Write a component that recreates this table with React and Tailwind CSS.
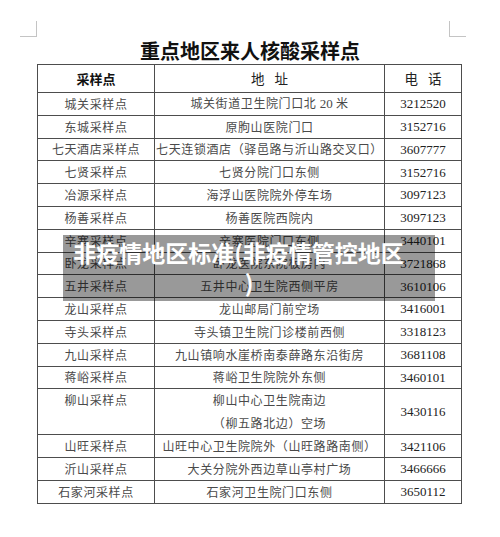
const rows = [
  { name: '城关采样点', addr: ['城关街道卫生院门口北 ', <span key="n" className="font-['Liberation_Serif',serif] text-[13px] tracking-normal">20</span>, ' 米'], tel: '3212520' },
  { name: '东城采样点', addr: '原朐山医院门口', tel: '3152716' },
  { name: '七天酒店采样点', addr: '七天连锁酒店（驿邑路与沂山路交叉口）', tel: '3607777' },
  { name: '七贤采样点', addr: '七贤分院门口东侧', tel: '3152716' },
  { name: '冶源采样点', addr: '海浮山医院院外停车场', tel: '3097123' },
  { name: '杨善采样点', addr: '杨善医院西院内', tel: '3097123' },
  { name: '辛寨采样点', addr: '辛寨医院门口东侧', tel: '3440101' },
  { name: '卧龙采样点', addr: '卧龙医院东院板房内', tel: '3721868' },
  { name: '五井采样点', addr: '五井中心卫生院西侧平房', tel: '3610106' },
  { name: '龙山采样点', addr: '龙山邮局门前空场', tel: '3416001' },
  { name: '寺头采样点', addr: '寺头镇卫生院门诊楼前西侧', tel: '3318123' },
  { name: '九山采样点', addr: '九山镇响水崖桥南泰薛路东沿街房', tel: '3681108' },
  { name: '蒋峪采样点', addr: '蒋峪卫生院院外东侧', tel: '3460101' },
]

const tail = [
  { name: '山旺采样点', addr: '山旺中心卫生院院外（山旺路路南侧）', tel: '3421106' },
  { name: '沂山采样点', addr: '大关分院外西边草山亭村广场', tel: '3466666' },
  { name: '石家河采样点', addr: '石家河卫生院门口东侧', tel: '3650112' },
]

const cell = 'border border-[#4d4d4d] p-0 text-center align-middle'
const cjk = "font-['Noto_Sans_CJK_SC',sans-serif]"
const num = "font-['Liberation_Serif',serif] text-[13px] text-[#222]"

const Row = ({ r }) => (
  <tr className="h-[22.8px]">
    <td className={`${cell} ${cjk} text-[12px] tracking-[0.6px] text-[#4a4a4a]`}>{r.name}</td>
    <td className={`${cell} ${cjk} text-[12px] tracking-[0.6px] text-[#4a4a4a] whitespace-nowrap`}>{r.addr}</td>
    <td className={`${cell} ${num}`}>{r.tel}</td>
  </tr>
)

export default function App() {
  return (
    <div className="relative w-[500px] h-[537px] bg-white pt-[21px] overflow-hidden">
      {/* corner marks */}
      <div className="flex justify-between ml-[20px] mr-[34px]">
        <div className="w-[17px] h-[16px] border-r border-b border-[#c4c4c4]" />
        <div className="w-[17px] h-[16px] border-l border-b border-[#c4c4c4]" />
      </div>

      <h1 className={`${cjk} text-[20px] leading-[26px] font-bold text-[#111] text-center pl-[-2px] mt-[1px]`}>
        重点地区来人核酸采样点
      </h1>

      <table className="ml-[37px] mt-[0px] w-[424px] table-fixed border-collapse">
        <colgroup>
          <col className="w-[117px]" />
          <col className="w-[230px]" />
          <col className="w-[77px]" />
        </colgroup>
        <tbody>
          <tr className="h-[28px]">
            <td className={`${cell} ${cjk} text-[13px] font-bold text-[#111]`}>采样点</td>
            <td className={`${cell} ${cjk} text-[13.5px] text-[#222]`}>
              <div className="flex justify-center gap-[10px]"><span>地</span><span>址</span></div>
            </td>
            <td className={`${cell} ${cjk} text-[13.5px] text-[#222]`}>
              <div className="flex justify-center gap-[10px]"><span>电</span><span>话</span></div>
            </td>
          </tr>
          {rows.map((r) => <Row key={r.name} r={r} />)}
          <tr className="h-[45px]">
            <td className={`${cell} ${cjk} text-[12px] tracking-[0.6px] text-[#4a4a4a] !align-top leading-[22px]`}>柳山采样点</td>
            <td className={`${cell} ${cjk} text-[12px] tracking-[0.6px] text-[#4a4a4a] leading-[22.5px]`}>
              <div>柳山中心卫生院南边</div>
              <div>（柳五路北边）空场</div>
            </td>
            <td className={`${cell} ${num}`}>3430116</td>
          </tr>
          {tail.map((r) => <Row key={r.name} r={r} />)}
        </tbody>
      </table>

      {/* overlay caption */}
      <div className={`absolute left-[63px] top-[235px] w-[372px] bg-black/40 pt-[2px] pb-[4px] ${cjk} text-white font-bold text-[23px] leading-[30px] text-center`}>
        <div className="pr-[21px]">非疫情地区标准(非疫情管控地区</div>
        <div>)</div>
      </div>
    </div>
  )
}
